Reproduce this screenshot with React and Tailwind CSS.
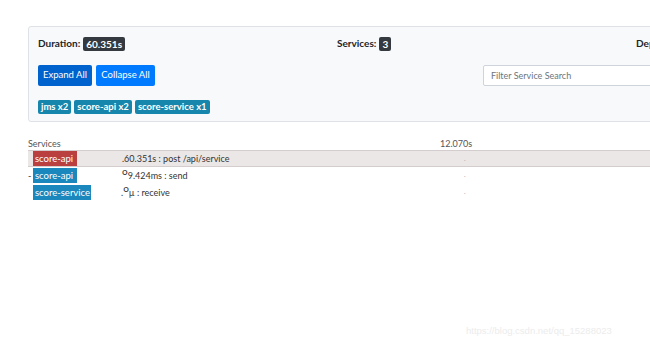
export default function App() {
  const tags = ['jms x2', 'score-api x2', 'score-service x1'];
  const rows = [
    { name: 'score-api', color: 'bg-[#b9403f]', width: 'w-[44px]', text: '.60.351s : post /api/service', dash: false, active: true },
    { name: 'score-api', color: 'bg-[#1a87bd]', width: 'w-[44px]', text: '9.424ms : send', sup: 'o', dash: true },
    { name: 'score-service', color: 'bg-[#1a87bd]', width: 'w-[58px]', text: 'µ : receive', sup: 'o', pre: '.', dash: false },
  ];

  return (
    <div className="relative h-[345px] w-[650px] overflow-hidden bg-white font-['Lato','Liberation_Sans',sans-serif] text-[#212529]">
      {/* Summary panel */}
      <div className="ml-[28px] mt-[26px] w-[920px] rounded-[3px] border border-[#dee2e6] bg-[#f8f9fa] px-[9px] pb-[7px] pt-[9px]">
        <div className="grid grid-cols-[299px_299px_299px] items-center">
          <div className="flex items-center gap-[3px] text-[10px] font-bold">
            Duration:
            <span className="rounded-[2px] bg-[#343a40] px-[3px] py-[1px] text-[10px] leading-[12px] text-white">60.351s</span>
          </div>
          <div className="flex items-center gap-[3px] text-[10px] font-bold">
            Services:
            <span className="rounded-[2px] bg-[#343a40] px-[3px] py-[1px] text-[10px] leading-[12px] text-white">3</span>
          </div>
          <div className="text-[10px] font-bold">Depth:</div>
        </div>

        <div className="mt-[14px] flex items-center">
          <div className="flex gap-[4px]">
            <button className="h-[21px] w-[54px] rounded-[2px] bg-[#0062cc] text-[9.5px] text-white">Expand All</button>
            <button className="h-[21px] w-[59px] rounded-[2px] bg-[#007bff] text-[9.5px] text-white">Collapse All</button>
          </div>
          <input
            placeholder="Filter Service Search"
            className="ml-[328px] h-[21px] w-[300px] rounded-[2px] border border-[#ced4da] bg-white px-[7px] text-[9px] placeholder:text-[#6c757d]"
          />
        </div>

        <div className="mt-[14px] flex gap-[3px]">
          {tags.map((t) => (
            <span key={t} className="rounded-[2px] bg-[#1686ad] px-[3px] text-[9.5px] font-bold leading-[14px] text-white">
              {t}
            </span>
          ))}
        </div>
      </div>

      {/* Trace table */}
      <div className="ml-[28px] mt-[16px] w-[622px] text-[9px] text-[#333]">
        <div className="relative flex h-[12px] items-center">
          <span className="text-[#555]">Services</span>
          <span className="absolute left-[412px] text-[#555]">12.070s</span>
        </div>
        {rows.map((r, i) => (
          <div
            key={i}
            className={`relative flex h-[17px] items-center ${r.active ? 'border-y border-[#d3cdcd] bg-[#ebe7e7]' : ''}`}
          >
            <span className="w-[5px] text-[#333]">{r.dash ? '-' : ''}</span>
            <span className={`${r.width} ${r.color} h-[15px] pl-[2px] text-[9.5px] leading-[15px] text-white`}>{r.name}</span>
            <span className={`${i === 2 ? 'ml-[30px]' : 'ml-[45px]'} flex items-start`}>
              {r.pre && <span>{r.pre}</span>}
              {r.sup && <span className="-mt-[3px] text-[10px] leading-[10px]">{r.sup}</span>}
              <span>{r.text}</span>
            </span>
            <span className="absolute left-[436px] top-[6px] text-[6px] leading-[6px] text-[#aaa]">·</span>
          </div>
        ))}
      </div>

      <div className="absolute left-[466px] top-[324px] font-['Liberation_Sans',sans-serif] text-[9.5px] text-[#ececec]">
        https://blog.csdn.net/qq_15288023
      </div>
    </div>
  );
}
